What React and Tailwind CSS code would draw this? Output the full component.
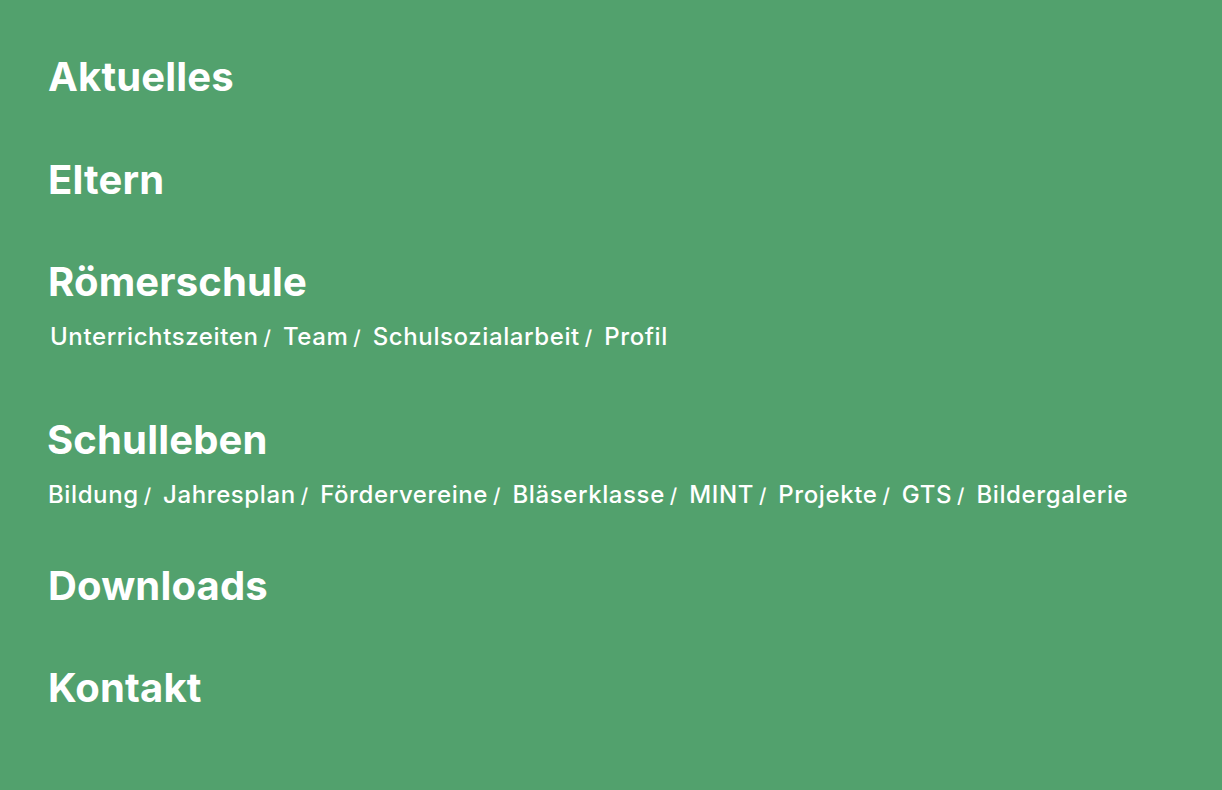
import React from "react";

const font = { fontFamily: "Inter, 'Noto Sans', sans-serif" };

function Sub({ items, className }) {
  return (
    <div className={"flex flex-wrap items-baseline text-[24px] leading-[32px] font-medium tracking-[0.025em] " + className}>
      {items.map((it, i) => (
        <span key={i} className="flex items-baseline">
          <span>{it}</span>
          {i < items.length - 1 && <span className="ml-[5px] mr-[12px] text-[20px] tracking-normal">/</span>}
        </span>
      ))}
    </div>
  );
}

export default function App() {
  return (
    <div className="w-[1222px] h-[790px] bg-[#52a16d] text-white overflow-hidden" style={font}>
      <div className="pl-[48px] pt-[53px] flex flex-col tracking-[0.01em]">
        <h2 className="text-[40px] leading-[48px] font-bold">Aktuelles</h2>
        <h2 className="mt-[55px] text-[40px] leading-[48px] font-bold">Eltern</h2>
        <h2 className="mt-[54px] text-[40px] leading-[48px] font-bold">Römerschule</h2>
        <Sub className="mt-[15px] pl-[2px]" items={["Unterrichtszeiten", "Team", "Schulsozialarbeit", "Profil"]} />
        <h2 className="mt-[62px] -ml-[1px] text-[40px] leading-[48px] font-bold">Schulleben</h2>
        <Sub className="mt-[15px]" items={["Bildung", "Jahresplan", "Fördervereine", "Bläserklasse", "MINT", "Projekte", "GTS", "Bildergalerie"]} />
        <h2 className="mt-[50px] text-[40px] leading-[48px] font-bold">Downloads</h2>
        <h2 className="mt-[54px] text-[40px] leading-[48px] font-bold">Kontakt</h2>
      </div>
    </div>
  );
}
